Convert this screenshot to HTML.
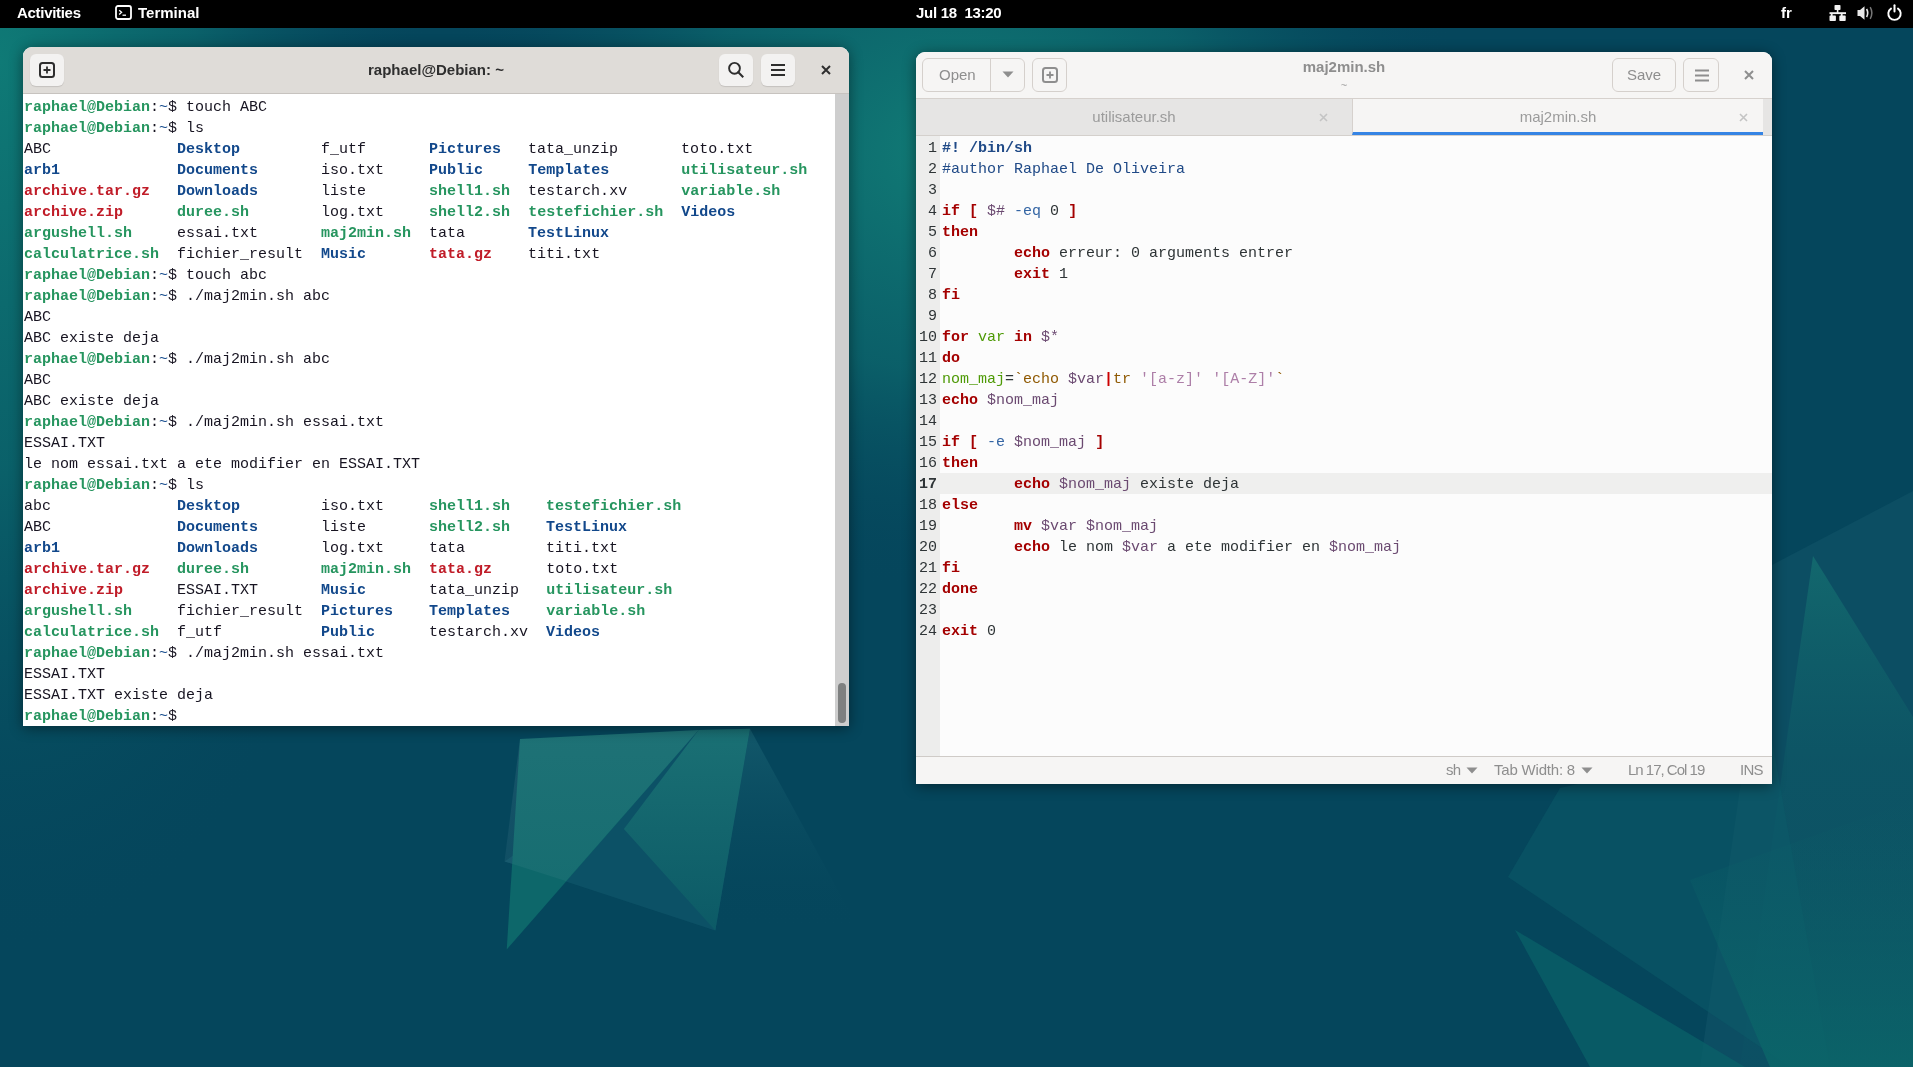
<!DOCTYPE html>
<html><head><meta charset="utf-8">
<style>
*{margin:0;padding:0;box-sizing:border-box}
html,body{width:1913px;height:1067px;overflow:hidden;background:#05465c;font-family:"Liberation Sans",sans-serif}
.abs{position:absolute}
.tt,.code,.ln,#topbar span,.title,.gbtn,.tab,.status span{will-change:transform}
#bg{position:absolute;left:0;top:0}
#topbar{position:absolute;left:0;top:0;width:1913px;height:28px;background:#000;color:#fff;font-size:15px;font-weight:bold}
#topbar span{position:absolute;top:4px;line-height:18px;white-space:pre}
/* terminal */
#term{position:absolute;left:23px;top:47px;width:826px;height:679px;background:#fff;border-radius:9px 9px 0 0;overflow:hidden;box-shadow:0 2px 14px rgba(0,0,0,.45)}
#term .hdr{position:absolute;left:0;top:0;width:826px;height:47px;background:#dfdcd8;border-bottom:1px solid #c7c3bf}
.tbtn{position:absolute;width:34px;height:32px;border-radius:6px;background:#f3f2f1;box-shadow:0 1px 1px rgba(0,0,0,.12)}
#term .title{position:absolute;left:0;width:826px;top:14px;text-align:center;font-size:15px;font-weight:bold;color:#2e2e2e}
.tt{position:absolute;left:1px;top:50px;font-family:"Liberation Mono",monospace;font-size:15px;line-height:21px;white-space:pre;color:#171421}
.g{color:#26955f;font-weight:bold}
.b{color:#12488b;font-weight:bold}
.r{color:#c01c28;font-weight:bold}
.sb{position:absolute;left:812px;top:47px;width:14px;height:632px;background:#cecece}
.thumb{position:absolute;left:3px;width:8px;border-radius:4px;background:#7e8080}
/* gedit */
#ged{position:absolute;left:916px;top:52px;width:856px;height:732px;background:#fcfcfc;border-radius:9px 9px 0 0;overflow:hidden;box-shadow:0 2px 14px rgba(0,0,0,.45)}
#ged .hdr{position:absolute;left:0;top:0;width:856px;height:47px;background:#f6f5f4;border-bottom:1px solid #d6d1cd}
.gbtn{position:absolute;height:34px;border:1px solid #d5d0cc;border-radius:6px;background:#f6f5f4;color:#8e8e8e;font-size:15px;text-align:center;line-height:31px}
.tabs{position:absolute;left:0;top:47px;width:856px;height:37px;background:#e6e5e4;border-bottom:1px solid #d4d0cc}
.tab{position:absolute;top:0;height:36px;font-size:15px;color:#9b9b9b;text-align:center;line-height:36px}
.gutter{position:absolute;left:0;top:84px;width:24px;height:620px;background:#ededec}
.code{position:absolute;left:26px;top:86px;font-family:"Liberation Mono",monospace;font-size:15px;line-height:21px;white-space:pre;color:#2e3436}
.ln{position:absolute;left:0;top:86px;width:21px;text-align:right;color:#2e3436;font-family:"Liberation Mono",monospace;font-size:15px;line-height:21px;white-space:pre}
.ln b{font-weight:bold}
.curline{position:absolute;left:24px;top:421px;width:832px;height:21px;background:#efefee}
.pipe{color:#cc0000;font-weight:bold}
.status{position:absolute;left:0;top:704px;width:856px;height:28px;background:#f6f5f4;border-top:1px solid #cfcbc7;font-size:15px;color:#8e8e8e}
.status span{position:absolute;top:4px;line-height:18px}
.k{color:#a40000;font-weight:bold}
.pp{color:#204a87;font-weight:bold}
.cm{color:#204a87}
.v{color:#6b4a71}
.op{color:#3465a4}
.vd{color:#4e9a06}
.bt{color:#8f5902}
.st{color:#ad7fa8}
</style></head>
<body>
<svg id="bg" width="1913" height="1067" viewBox="0 0 1913 1067">
  <defs>
    <radialGradient id="gl" cx="0" cy="60" r="620" gradientUnits="userSpaceOnUse" gradientTransform="translate(0,60) scale(0.7,1.45) translate(0,-60)">
      <stop offset="0" stop-color="#0f7a76"/>
      <stop offset="0.45" stop-color="#0c6a6e" stop-opacity=".75"/>
      <stop offset="1" stop-color="#05465c" stop-opacity="0"/>
    </radialGradient>
    <radialGradient id="gm" cx="950" cy="150" r="420" gradientUnits="userSpaceOnUse" gradientTransform="translate(950,150) scale(1.25,1.05) translate(-950,-150)">
      <stop offset="0" stop-color="#117c76"/>
      <stop offset="0.5" stop-color="#0d6a6e" stop-opacity=".7"/>
      <stop offset="1" stop-color="#05465c" stop-opacity="0"/>
    </radialGradient>
    <linearGradient id="gr" x1="0" y1="0" x2="0" y2="1">
      <stop offset="0" stop-color="#0e5f6a"/>
      <stop offset="1" stop-color="#0b6a6c"/>
    </linearGradient>
  <linearGradient id="grB" x1="0" y1="556" x2="0" y2="1067" gradientUnits="userSpaceOnUse">
      <stop offset="0" stop-color="#13696e" stop-opacity=".95"/>
      <stop offset="0.4" stop-color="#0e5c67" stop-opacity=".45"/>
      <stop offset="1" stop-color="#0b5a66" stop-opacity=".15"/>
    </linearGradient>
    <linearGradient id="grC" x1="0" y1="800" x2="0" y2="1067" gradientUnits="userSpaceOnUse">
      <stop offset="0" stop-color="#0b6268" stop-opacity="0"/>
      <stop offset="1" stop-color="#0b6669" stop-opacity=".85"/>
    </linearGradient>
  <linearGradient id="gT3" x1="0" y1="0" x2="0" y2="1">
      <stop offset="0" stop-color="#145a6c" stop-opacity=".9"/>
      <stop offset="1" stop-color="#05465c" stop-opacity="0"/>
    </linearGradient>
    <linearGradient id="gT2" x1="0" y1="0" x2="0" y2="1">
      <stop offset="0" stop-color="#1a7074"/>
      <stop offset="1" stop-color="#0c5a66"/>
    </linearGradient>
    <linearGradient id="gQ" x1="0" y1="0" x2="0" y2="1">
      <stop offset="0" stop-color="#9cc0cc" stop-opacity=".12"/>
      <stop offset="1" stop-color="#9cc0cc" stop-opacity=".07"/>
    </linearGradient>
  </defs>
  <rect width="1913" height="1067" fill="#05465c"/>
  <rect width="1913" height="1067" fill="url(#gl)"/>
  <rect width="1913" height="1067" fill="url(#gm)"/>
  <!-- bottom-center shards -->
  <polygon points="504.5,861.4 698.6,730 750,728.7 715.3,930.6" fill="#0e5467" opacity=".85"/>
  <polygon points="750,728.7 857,925 715.3,930.6" fill="url(#gT3)"/>
  <polygon points="698.6,730 750,728.7 715.3,930.6 623.9,829" fill="url(#gT2)"/>
  <polygon points="506.7,949.6 520,739 698.6,730" fill="#0d676a"/>
  <polygon points="520,739 698.6,730 566,881 504.5,861.4" fill="url(#gQ)"/>
  <!-- right shards -->
  <polygon points="1772,565 1913,491 1913,1067 1700,1067" fill="#115467" opacity=".6"/>
  <polygon points="1813,556 1913,717 1913,1067 1740,1067" fill="url(#grB)"/>
  <polygon points="1508,877 1560,788 1772,740 1830,1067 1790,1067" fill="#0b5c69" opacity=".5"/>
  <polygon points="1515,930 1590,1067 1745,1067" fill="#0a6269" opacity=".7"/>
  <polygon points="1690,880 1913,800 1913,1067 1770,1067" fill="url(#grC)"/>
  </svg>

<div id="topbar">
  <span style="left:17px;letter-spacing:-0.3px">Activities</span>
  <svg class="abs" style="left:115px;top:5px" width="17" height="15" viewBox="0 0 17 15"><rect x="1" y="1" width="15" height="13" rx="2" fill="none" stroke="#fff" stroke-width="1.8"/><path d="M4.2 5.2 L6.6 7.3 L4.2 9.4" fill="none" stroke="#fff" stroke-width="1.3"/><path d="M7.5 10.2 H11" stroke="#fff" stroke-width="1.3"/></svg>
  <span style="left:138px">Terminal</span>
  <span style="left:916px;letter-spacing:-0.3px">Jul 18&nbsp;&nbsp;13:20</span>
  <span style="left:1781px">fr</span>
  <svg class="abs" style="left:1829px;top:5px" width="18" height="17" viewBox="0 0 18 17"><rect x="5.5" y="0" width="6" height="5" rx=".8" fill="#f2f2f2"/><rect x="7.8" y="4" width="1.6" height="4" fill="#f2f2f2"/><rect x="0.5" y="7.2" width="16.5" height="1.9" fill="#f2f2f2"/><rect x="1.8" y="8" width="1.8" height="3" fill="#f2f2f2"/><rect x="11.8" y="8" width="1.8" height="3" fill="#f2f2f2"/><rect x="0.5" y="10.6" width="6.4" height="5.4" rx=".8" fill="#f2f2f2"/><rect x="10.3" y="10.6" width="6.4" height="5.4" rx=".8" fill="#f2f2f2"/></svg>
  <svg class="abs" style="left:1857px;top:5px" width="18" height="16" viewBox="0 0 18 16"><path d="M0.5 5 H3 L7.5 1.2 V14.8 L3 11 H0.5 Z" fill="#e8e8e8"/><path d="M9.6 4 Q11.8 8 9.6 12" fill="none" stroke="#e8e8e8" stroke-width="1.6"/><path d="M13.2 2.2 Q16.5 8 13.2 13.8" fill="none" stroke="#777" stroke-width="1.5"/></svg>
  <svg class="abs" style="left:1886px;top:4px" width="17" height="17" viewBox="0 0 17 17"><path d="M5 4.6 A6.2 6.2 0 1 0 12 4.6" fill="none" stroke="#fff" stroke-width="1.9" stroke-linecap="round"/><path d="M8.5 1.3 V7.5" stroke="#fff" stroke-width="2" stroke-linecap="round"/></svg>
</div>

<div id="term">
  <div class="hdr">
    <div class="tbtn" style="left:7px;top:7px"><svg class="abs" style="left:9px;top:8px" width="16" height="16" viewBox="0 0 16 16"><rect x="1" y="1" width="14" height="14" rx="2.5" fill="none" stroke="#2e2e2e" stroke-width="2"/><path d="M8 4.5 V11.5 M4.5 8 H11.5" stroke="#2e2e2e" stroke-width="1.8"/></svg></div>
    <div class="title">raphael@Debian: ~</div>
    <div class="tbtn" style="left:696px;top:7px"><svg class="abs" style="left:8px;top:7px" width="18" height="18" viewBox="0 0 18 18"><circle cx="7.5" cy="7.3" r="5.4" fill="none" stroke="#2e2e2e" stroke-width="1.9"/><path d="M11.3 11.2 L15.5 15.4" stroke="#2e2e2e" stroke-width="2.1" stroke-linecap="square"/></svg></div>
    <div class="tbtn" style="left:738px;top:7px"><svg class="abs" style="left:9px;top:9px" width="16" height="14" viewBox="0 0 16 14"><path d="M1 2 H15 M1 7 H15 M1 12 H15" stroke="#2e2e2e" stroke-width="2"/></svg></div>
    <svg class="abs" style="left:798px;top:18px" width="10" height="10" viewBox="0 0 10 10"><path d="M1 1 L9 9 M9 1 L1 9" stroke="#2e2e2e" stroke-width="2"/></svg>
  </div>
  <div class="tt"><span class="g">raphael@Debian</span>:<span class="b" style="font-weight:normal">~</span>$ touch ABC
<span class="g">raphael@Debian</span>:<span class="b" style="font-weight:normal">~</span>$ ls
ABC              <span class="b">Desktop</span>         f_utf       <span class="b">Pictures</span>   tata_unzip       toto.txt
<span class="b">arb1</span>             <span class="b">Documents</span>       iso.txt     <span class="b">Public</span>     <span class="b">Templates</span>        <span class="g">utilisateur.sh</span>
<span class="r">archive.tar.gz</span>   <span class="b">Downloads</span>       liste       <span class="g">shell1.sh</span>  testarch.xv      <span class="g">variable.sh</span>
<span class="r">archive.zip</span>      <span class="g">duree.sh</span>        log.txt     <span class="g">shell2.sh</span>  <span class="g">testefichier.sh</span>  <span class="b">Videos</span>
<span class="g">argushell.sh</span>     essai.txt       <span class="g">maj2min.sh</span>  tata       <span class="b">TestLinux</span>
<span class="g">calculatrice.sh</span>  fichier_result  <span class="b">Music</span>       <span class="r">tata.gz</span>    titi.txt
<span class="g">raphael@Debian</span>:<span class="b" style="font-weight:normal">~</span>$ touch abc
<span class="g">raphael@Debian</span>:<span class="b" style="font-weight:normal">~</span>$ ./maj2min.sh abc
ABC
ABC existe deja
<span class="g">raphael@Debian</span>:<span class="b" style="font-weight:normal">~</span>$ ./maj2min.sh abc
ABC
ABC existe deja
<span class="g">raphael@Debian</span>:<span class="b" style="font-weight:normal">~</span>$ ./maj2min.sh essai.txt
ESSAI.TXT
le nom essai.txt a ete modifier en ESSAI.TXT
<span class="g">raphael@Debian</span>:<span class="b" style="font-weight:normal">~</span>$ ls
abc              <span class="b">Desktop</span>         iso.txt     <span class="g">shell1.sh</span>    <span class="g">testefichier.sh</span>
ABC              <span class="b">Documents</span>       liste       <span class="g">shell2.sh</span>    <span class="b">TestLinux</span>
<span class="b">arb1</span>             <span class="b">Downloads</span>       log.txt     tata         titi.txt
<span class="r">archive.tar.gz</span>   <span class="g">duree.sh</span>        <span class="g">maj2min.sh</span>  <span class="r">tata.gz</span>      toto.txt
<span class="r">archive.zip</span>      ESSAI.TXT       <span class="b">Music</span>       tata_unzip   <span class="g">utilisateur.sh</span>
<span class="g">argushell.sh</span>     fichier_result  <span class="b">Pictures</span>    <span class="b">Templates</span>    <span class="g">variable.sh</span>
<span class="g">calculatrice.sh</span>  f_utf           <span class="b">Public</span>      testarch.xv  <span class="b">Videos</span>
<span class="g">raphael@Debian</span>:<span class="b" style="font-weight:normal">~</span>$ ./maj2min.sh essai.txt
ESSAI.TXT
ESSAI.TXT existe deja
<span class="g">raphael@Debian</span>:<span class="b" style="font-weight:normal">~</span>$ </div>
  <div class="sb"><div class="thumb" style="top:589px;height:40px"></div></div>
</div>

<div id="ged">
  <div class="hdr">
    <div class="gbtn" style="left:6px;top:6px;width:103px;text-align:left;padding-left:16px">Open<div class="abs" style="left:67px;top:0;width:1px;height:32px;background:#d5d0cc"></div></div>
    <svg class="abs" style="left:86px;top:19px" width="12" height="7" viewBox="0 0 12 7"><path d="M0.5 0.5 H11.5 L6 6.5 Z" fill="#8e8e8e"/></svg>
    <div class="gbtn" style="left:116px;top:6px;width:35px"><svg class="abs" style="left:9px;top:8px" width="16" height="16" viewBox="0 0 16 16"><rect x="1" y="1" width="14" height="14" rx="2.5" fill="none" stroke="#8e8e8e" stroke-width="2"/><path d="M8 4.5 V11.5 M4.5 8 H11.5" stroke="#8e8e8e" stroke-width="1.8"/></svg></div>
    <div class="abs" style="left:0;width:856px;top:6px;text-align:center;font-size:15px;font-weight:bold;color:#8e8e8e;padding-left:0">maj2min.sh</div>
    <div class="abs" style="left:0;width:856px;top:27px;text-align:center;font-size:11px;color:#a0a0a0">~</div>
    <div class="gbtn" style="left:696px;top:6px;width:64px">Save</div>
    <div class="gbtn" style="left:767px;top:6px;width:36px"><svg class="abs" style="left:10px;top:10px" width="16" height="13" viewBox="0 0 16 13"><path d="M1 1.5 H15 M1 6.5 H15 M1 11.5 H15" stroke="#8e8e8e" stroke-width="2"/></svg></div>
    <svg class="abs" style="left:828px;top:18px" width="10" height="10" viewBox="0 0 10 10"><path d="M1 1 L9 9 M9 1 L1 9" stroke="#8e8e8e" stroke-width="2"/></svg>
  </div>
  <div class="tabs">
    <div class="tab" style="left:0;width:436px">utilisateur.sh</div>
    <svg class="abs" style="left:403px;top:14px" width="9" height="9" viewBox="0 0 9 9"><path d="M1 1 L8 8 M8 1 L1 8" stroke="#c4c4c4" stroke-width="1.6"/></svg>
    <div class="tab" style="left:436px;width:411px;background:#f6f5f4;border-left:1px solid #d6d1cd;border-bottom:3px solid #3584e4">maj2min.sh</div>
    <svg class="abs" style="left:823px;top:14px" width="9" height="9" viewBox="0 0 9 9"><path d="M1 1 L8 8 M8 1 L1 8" stroke="#c4c4c4" stroke-width="1.6"/></svg>
  </div>
  <div class="gutter"></div>
  <div class="curline"></div><div class="ln">1
2
3
4
5
6
7
8
9
10
11
12
13
14
15
16
<b>17</b>
18
19
20
21
22
23
24</div><div class="code"><span class="pp">#! /bin/sh</span>
<span class="cm">#author Raphael De Oliveira</span>

<span class="k">if</span> <span class="k">[</span> <span class="v">$#</span> <span class="op">-eq</span> 0 <span class="k">]</span>
<span class="k">then</span>
        <span class="k">echo</span> erreur: 0 arguments entrer
        <span class="k">exit</span> 1
<span class="k">fi</span>

<span class="k">for</span> <span class="vd">var</span> <span class="k">in</span> <span class="v">$*</span>
<span class="k">do</span>
<span class="vd">nom_maj</span>=<span class="bt">`echo </span><span class="v">$var</span><span class="pipe">|</span><span class="bt">tr </span><span class="st">'[a-z]'</span> <span class="st">'[A-Z]'</span><span class="bt">`</span>
<span class="k">echo</span> <span class="v">$nom_maj</span>

<span class="k">if</span> <span class="k">[</span> <span class="op">-e</span> <span class="v">$nom_maj</span> <span class="k">]</span>
<span class="k">then</span>
        <span class="k">echo</span> <span class="v">$nom_maj</span> existe deja
<span class="k">else</span>
        <span class="k">mv</span> <span class="v">$var</span> <span class="v">$nom_maj</span>
        <span class="k">echo</span> le nom <span class="v">$var</span> a ete modifier en <span class="v">$nom_maj</span>
<span class="k">fi</span>
<span class="k">done</span>

<span class="k">exit</span> 0</div>
  <div class="status">
    <span style="left:530px;letter-spacing:-0.8px">sh</span>
    <svg class="abs" style="left:550px;top:10px" width="12" height="7" viewBox="0 0 12 7"><path d="M0.5 0.5 H11.5 L6 6.5 Z" fill="#8e8e8e"/></svg>
    <span style="left:578px;letter-spacing:-0.2px">Tab Width: 8</span>
    <svg class="abs" style="left:665px;top:10px" width="12" height="7" viewBox="0 0 12 7"><path d="M0.5 0.5 H11.5 L6 6.5 Z" fill="#8e8e8e"/></svg>
    <span style="left:712px;letter-spacing:-1px">Ln 17, Col 19</span>
    <span style="left:824px;letter-spacing:-0.7px">INS</span>
  </div>
</div>
</body></html>
